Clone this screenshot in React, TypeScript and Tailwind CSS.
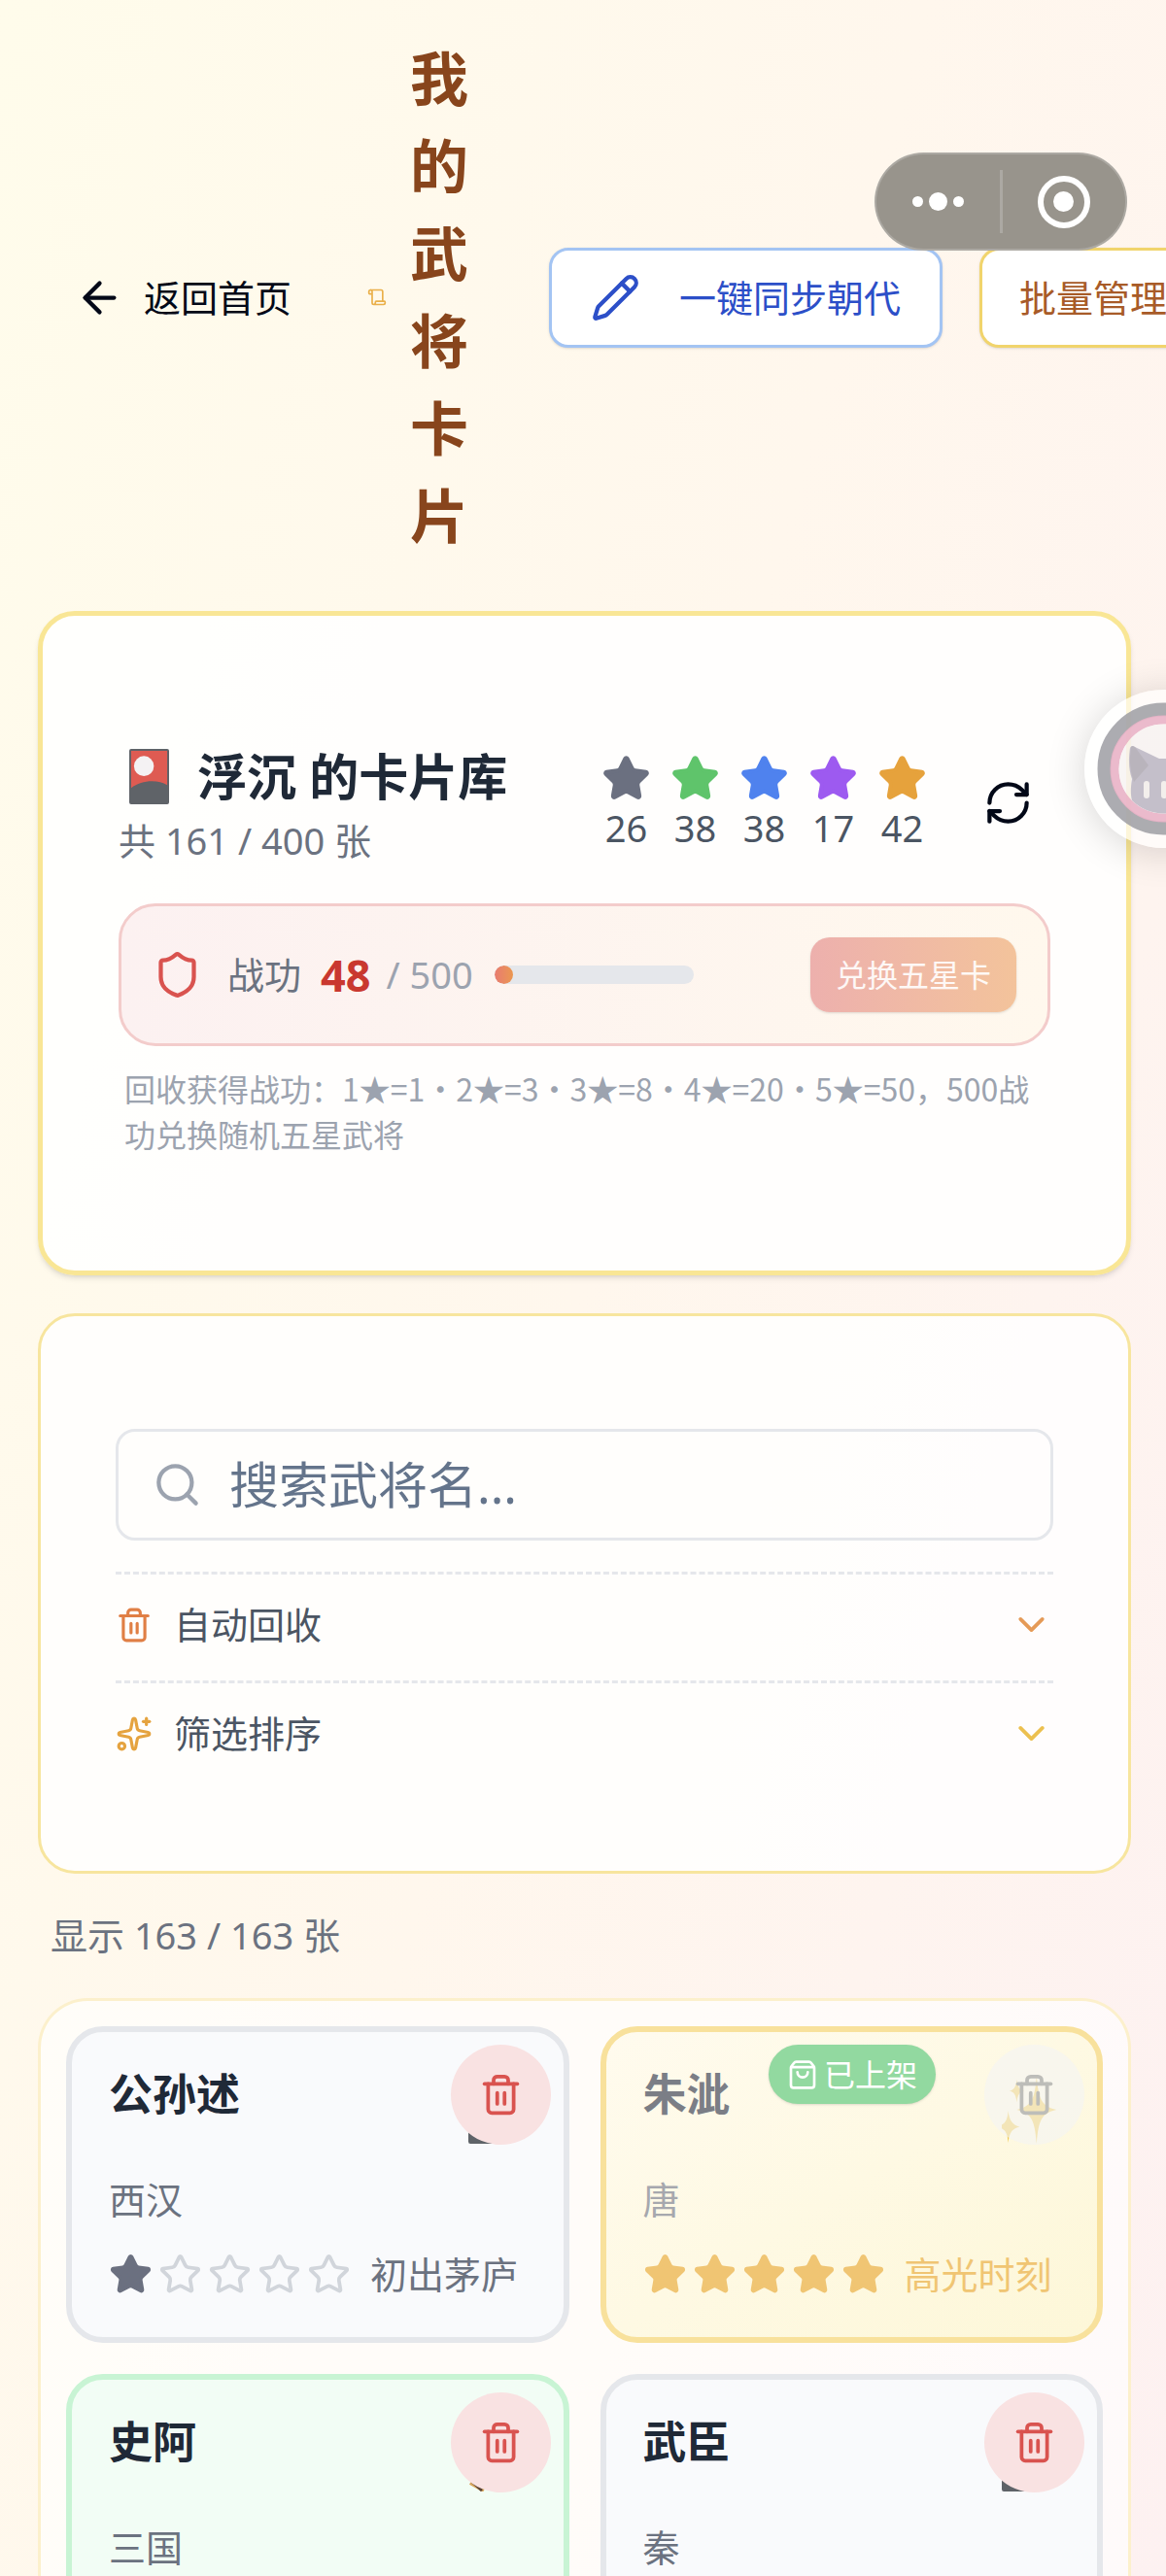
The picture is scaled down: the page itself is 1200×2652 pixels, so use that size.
import React from 'react';
import {
  ArrowLeft,
  ChevronDown,
  Pencil,
  RefreshCw,
  Scroll,
  Search,
  Shield,
  ShoppingBag,
  Sparkles,
  Star,
  Trash2,
} from 'lucide-react';
import clsx from 'clsx';

type Rarity = 'common' | 'rare' | 'legend';

interface General {
  name: string;
  dynasty: string;
  stars: number;
  rarity: Rarity;
  tier?: string;
  listed?: boolean;
}

const GENERALS: General[] = [
  { name: '公孙述', dynasty: '西汉', stars: 1, rarity: 'common', tier: '初出茅庐' },
  { name: '朱泚', dynasty: '唐', stars: 5, rarity: 'legend', tier: '高光时刻', listed: true },
  { name: '史阿', dynasty: '三国', stars: 2, rarity: 'rare' },
  { name: '武臣', dynasty: '秦', stars: 1, rarity: 'common' },
];

const STAR_COUNTS = [
  { level: 1, count: 26, color: 'fill-[#6b7080] text-[#6b7080]' },
  { level: 2, count: 38, color: 'fill-[#5fc46b] text-[#5fc46b]' },
  { level: 3, count: 38, color: 'fill-[#4f82ee] text-[#4f82ee]' },
  { level: 4, count: 17, color: 'fill-[#9d5af0] text-[#9d5af0]' },
  { level: 5, count: 42, color: 'fill-[#e6a23c] text-[#e6a23c]' },
];

const CARD_STYLES: Record<Rarity, string> = {
  common: 'border-[#e5e7eb] bg-[#f9fafc]',
  rare: 'border-[#c8f4d4] bg-[#f2fdf5]',
  legend: 'border-[#f8e19c] bg-linear-to-br from-[#fffbee] to-[#fdf7d8]',
};

const FILLED_STAR: Record<Rarity, string> = {
  common: 'fill-[#6b7080] text-[#6b7080]',
  rare: 'fill-[#5fc46b] text-[#5fc46b]',
  legend: 'fill-[#f0c573] text-[#f0c573]',
};

const HanafudaIcon = ({ className }: { className?: string }) => (
  <svg className={className} viewBox="0 0 42 58" preserveAspectRatio="none" aria-hidden="true">
    <rect width="42" height="58" rx="2" fill="#5f6368" />
    <path d="M2 2h38v36c-9-6-27-6-38 3z" fill="#de5b52" />
    <circle cx="15.500" cy="18" r="10.500" fill="#f4f2f3" />
  </svg>
);

const SwordsIcon = ({ className }: { className?: string }) => (
  <svg className={className} viewBox="0 0 56 64" aria-hidden="true">
    <path d="M50 4 10 54M6 4l40 50" stroke="#b8bcc2" strokeWidth="5" />
    <path d="m2 55 14 8M54 55l-14 8" stroke="#d9a55c" strokeWidth="4" />
    <path d="m4 54 10 9M52 54l-8 8" stroke="#5a4334" strokeWidth="3" />
  </svg>
);

const TwinkleIcon = ({ className }: { className?: string }) => (
  <svg className={className} viewBox="0 0 60 72" aria-hidden="true" fill="#efc84a">
    <path d="M36 0c2 25 5 32 21 36-16 4-19 11-21 36-2-25-5-32-21-36 16-4 19-11 21-36z" />
    <path d="M15 4c1 8 3 11 8 12-5 1-7 4-8 12-1-8-3-11-8-12 5-1 7-4 8-12z" />
    <path d="M6 37c1 11 5 15 12 17-7 2-11 5-12 17-1-12-4-15-12-17 8-2 11-6 12-17z" />
  </svg>
);

const RarityEmblem = ({ rarity }: { rarity: Rarity }) => {
  if (rarity === 'legend') return <TwinkleIcon className="h-[70px] w-[60px]" />;
  if (rarity === 'rare') return <SwordsIcon className="mr-1 h-[64px] w-[56px]" />;
  return <HanafudaIcon className="mr-4 h-[64px] w-[44px]" />;
};

const GeneralCard = ({ general }: { general: General }) => {
  const { name, dynasty, stars, rarity, tier, listed } = general;

  return (
    <article
      className={clsx(
        'relative min-h-[326px] rounded-[38px] border-[6px] px-[38px] py-[38px]',
        CARD_STYLES[rarity]
      )}
    >
      <div className="flex h-[83px] items-start justify-between">
        <h3
          className={clsx(
            'text-[45px] leading-[51px] font-bold',
            listed ? 'text-[#7b7e86]' : 'text-[#1f2937]'
          )}
        >
          {name}
        </h3>
        <span className="flex self-end pb-1.5">
          <RarityEmblem rarity={rarity} />
        </span>
      </div>
      <p
        className={clsx(
          'mt-[26px] text-[38px] leading-[51px]',
          listed ? 'text-[#a6a8ae]' : 'text-[#6b7280]'
        )}
      >
        {dynasty}
      </p>
      {tier && (
        <div className="mt-[26px] flex items-center gap-5">
          <div className="flex gap-1.5">
            {[1, 2, 3, 4, 5].map((n) => (
              <Star
                key={n}
                className={clsx('size-[45px]', n <= stars ? FILLED_STAR[rarity] : 'text-[#d1d5db]')}
              />
            ))}
          </div>
          <span
            className={clsx(
              'text-[38px] leading-[51px] whitespace-nowrap',
              listed ? 'text-[#f0c573]' : 'text-[#6b7280]'
            )}
          >
            {tier}
          </span>
        </div>
      )}

      {listed && (
        <span className="absolute top-[13px] right-[166px] flex items-center gap-1.5 rounded-full bg-[#92d9a0] px-[19px] text-[32px] leading-[61px] text-white shadow-sm">
          <ShoppingBag className="size-8" />
          已上架
        </span>
      )}
      <button
        aria-label={`回收 ${name}`}
        disabled={listed}
        className={clsx(
          'absolute top-[13px] right-[13px] flex size-[103px] items-center justify-center rounded-full',
          listed ? 'bg-[#f5f5f3]/65 text-[#bdbdb9]' : 'bg-[#f9e2e2] text-[#d9534f]'
        )}
      >
        <Trash2 className="size-[45px]" />
      </button>
    </article>
  );
};

const Header = () => (
  <header className="flex items-center pt-9 pb-[53px] text-[38px] leading-[51px]">
    <a href="#home" className="flex shrink-0 items-center gap-5 px-[38px] text-[#020817]">
      <ArrowLeft className="size-[51px]" />
      返回首页
    </a>
    <Scroll className="ml-10 size-5 shrink-0 text-[#eab04a]" />
    <h1 className="ml-6 w-[60px] shrink-0 text-[60px] leading-[90px] font-bold break-all text-[#88451c]">
      我的武将卡片
    </h1>
    <div className="ml-[83px] flex shrink-0 gap-[38px] whitespace-nowrap">
      <button className="flex h-[103px] items-center gap-10 rounded-[20px] border-3 border-[#a3c4f3] bg-white px-10 text-[#2c4fc8] shadow-sm">
        <Pencil className="size-[51px]" />
        一键同步朝代
      </button>
      <button className="h-[103px] rounded-[20px] border-3 border-[#f1d46c] bg-white px-[38px] text-[#a85b28] shadow-sm">
        批量管理
      </button>
    </div>
  </header>
);

const LibraryCard = () => (
  <section className="rounded-[38px] border-[5px] border-[#f9e695] bg-white/90 px-[78px] pt-[127px] pb-[117px] shadow-md">
    <div className="flex items-center">
      <div>
        <h2 className="flex items-center text-[51px] leading-[77px] font-bold whitespace-nowrap text-[#1f2937]">
          <HanafudaIcon className="mr-[29px] ml-[11px] h-[57px] w-[41px]" />
          浮沉 的卡片库
        </h2>
        <p className="text-[38px] leading-[54px] text-[#6b7280]">共 161 / 400 张</p>
      </div>
      <ul className="ml-auto flex gap-5 text-[38px] leading-[51px] text-[#4b5563]">
        {STAR_COUNTS.map(({ level, count, color }) => (
          <li key={level} className="flex w-[51px] flex-col items-center">
            <Star className={clsx('size-[51px]', color)} />
            {count}
          </li>
        ))}
      </ul>
      <button aria-label="刷新" className="mr-[18px] ml-[58px] text-[#020817]">
        <RefreshCw className="size-[51px]" />
      </button>
    </div>

    <div className="mt-[38px] flex h-[147px] items-center rounded-[38px] border-3 border-[#f3cccb] bg-linear-to-r from-[#fcf1f1] to-[#fff8ed] px-8 text-[38px] whitespace-nowrap">
      <Shield className="size-[51px] shrink-0 text-[#d9534f]" />
      <span className="ml-[26px] text-[#6b7280]">战功</span>
      <span className="ml-5 text-[45px] font-bold text-[#c9382f]">48</span>
      <span className="ml-4 text-[#9ca3af]">/ 500</span>
      <div className="ml-[22px] h-[19px] w-[205px] overflow-hidden rounded-full bg-[#e5e7eb]">
        <div
          className="h-full rounded-full bg-linear-to-r from-[#e87b70] to-[#eb974f]"
          style={{ width: `${(48 / 500) * 100}%` }}
        />
      </div>
      <button
        disabled
        className="ml-auto h-[77px] rounded-[20px] bg-linear-to-r from-[#edb0ad] to-[#f3c39b] px-[26px] text-[32px] text-white/90 shadow-sm"
      >
        兑换五星卡
      </button>
    </div>
    <p className="mt-5 px-1.5 font-['Noto_Sans_CJK_SC',sans-serif] text-[32px] leading-[47px] text-[#9ca3af]">
      回收获得战功：1★=1·2★=3·3★=8·4★=20·5★=50，500战功兑换随机五星武将
    </p>
  </section>
);

const FilterCard = () => (
  <section className="mt-[39px] rounded-[38px] border-3 border-[#f7e59e] bg-white/85 px-[77px] py-[116px]">
    <label className="flex h-[115px] items-center gap-7 rounded-[20px] border-3 border-[#e5e7eb] px-[35px] text-[#9ca3af]">
      <Search className="size-[51px] shrink-0" />
      <input
        type="text"
        aria-label="搜索武将名"
        placeholder="搜索武将名..."
        className="min-w-0 flex-1 bg-transparent text-[51px] leading-[77px] text-[#1f2937] outline-none placeholder:text-[#64748b]"
      />
    </label>
    <button className="mt-8 flex w-full items-center border-t-3 border-dashed border-[#e5e7eb] pt-[26px] text-[38px] leading-[51px] text-[#4b5563]">
      <Trash2 className="size-[38px] text-[#e07f45]" />
      <span className="ml-[22px]">自动回收</span>
      <ChevronDown className="ml-auto size-[45px] text-[#e59a57]" />
    </button>
    <button className="mt-8 flex w-full items-center border-t-3 border-dashed border-[#e5e7eb] pt-[26px] text-[38px] leading-[51px] text-[#4b5563]">
      <Sparkles className="size-[38px] text-[#e5a33f]" />
      <span className="ml-[22px]">筛选排序</span>
      <ChevronDown className="ml-auto size-[45px] text-[#ecc04f]" />
    </button>
  </section>
);

// Host app capsule, floats over the page header
const HostCapsule = () => (
  <div className="absolute top-[157px] right-10 flex h-[101px] w-[260px] items-center rounded-full border-2 border-white/20 bg-[#98948c]">
    <button aria-label="更多" className="flex flex-1 items-center justify-center gap-1.5">
      <span className="size-[11px] rounded-full bg-white" />
      <span className="size-[19px] rounded-full bg-white" />
      <span className="size-[11px] rounded-full bg-white" />
    </button>
    <span className="h-[65px] w-[3px] bg-white/20" />
    <button aria-label="关闭" className="flex flex-1 justify-center">
      <span className="flex size-[54px] items-center justify-center rounded-full border-[6px] border-white">
        <span className="size-[21px] rounded-full bg-white" />
      </span>
    </button>
  </div>
);

const FloatingAvatar = () => (
  <button
    aria-label="助手"
    className="absolute top-[710px] -right-[79px] size-[163px] rounded-full bg-white/65 shadow-[0_4px_40px_rgba(0,0,0,0.16)]"
  >
    <svg viewBox="0 0 163 163" className="size-full" aria-hidden="true">
      <circle cx="81.500" cy="81.500" r="61" fill="none" stroke="#9e9da3" strokeWidth="14" opacity="0.85" />
      <circle cx="81.500" cy="81.500" r="50.500" fill="none" stroke="#e9b3c6" strokeWidth="9" opacity="0.9" />
      <circle cx="81.500" cy="81.500" r="46" fill="#f3efec" opacity="0.6" />
      <path
        d="M47 60q1-3 5-1l25 12h9l25-12q4-2 5 1c3 16 2 23 0 32 1 14 0 18-2 22a46 46 0 0 1-65 0c-2-8-1-15 0-22-3-9-4-18-2-32z"
        fill="#c4bfca"
      />
      <path d="M48 59q1-2 4 0l14 19-15 17c-4-11-5-22-3-36z" fill="#b9b4bc" />
      <rect x="61" y="94" width="6" height="18" rx="3" fill="#f3efec" />
      <rect x="79" y="94" width="6" height="18" rx="3" fill="#f3efec" />
    </svg>
  </button>
);

export default function App() {
  return (
    <div className="relative h-screen overflow-hidden bg-linear-105 from-[#fffceb] via-[#fff7ed] to-[#fdf1f1] font-['Noto_Sans','Noto_Sans_CJK_SC',sans-serif]">
      <main className="px-9 pl-[39px]">
        <Header />
        <LibraryCard />
        <FilterCard />
        <p className="mt-[38px] px-[13px] text-[38px] leading-[51px] text-[#6b7280]">显示 163 / 163 张</p>
        <section className="mt-[39px] grid grid-cols-2 gap-8 rounded-t-[51px] border-3 border-b-0 border-[#fcf0cc] bg-white/65 p-[26px]">
          {GENERALS.map((general) => (
            <GeneralCard key={general.name} general={general} />
          ))}
        </section>
      </main>
      <HostCapsule />
      <FloatingAvatar />
    </div>
  );
}
